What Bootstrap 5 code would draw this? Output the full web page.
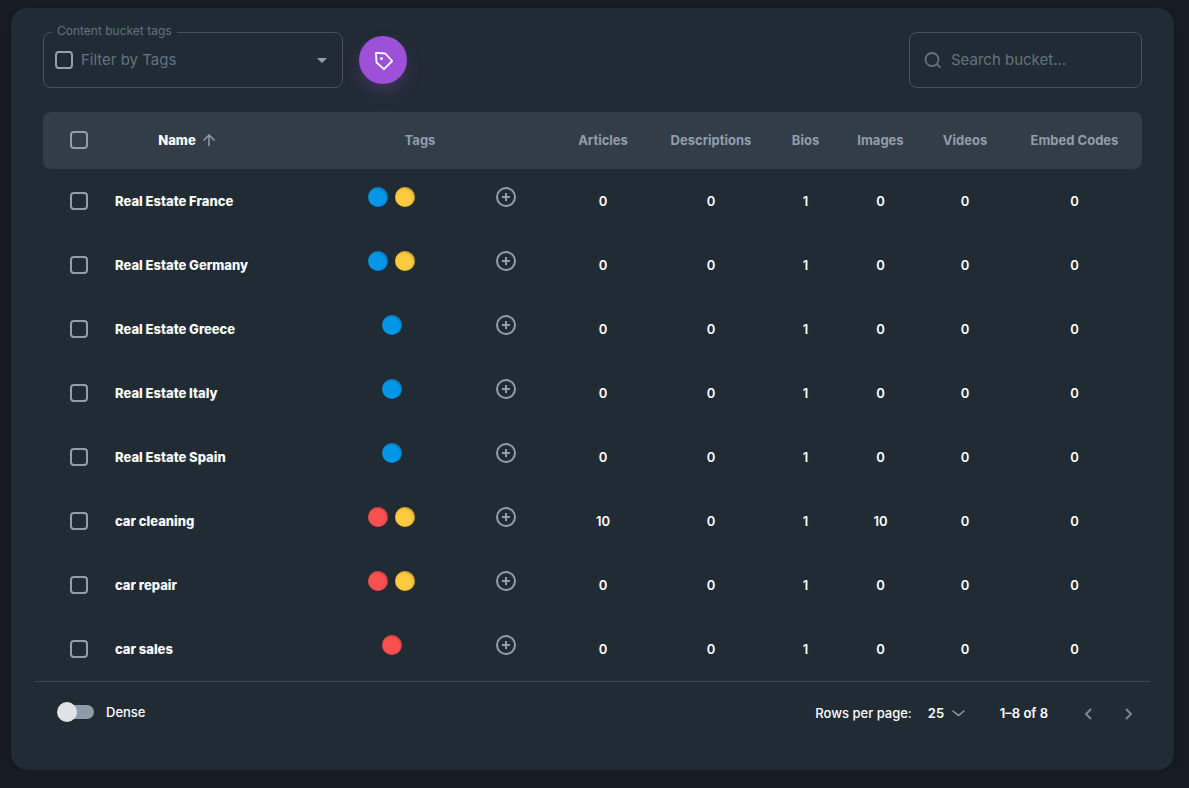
<!DOCTYPE html>
<html lang="en" data-bs-theme="dark">
<head>
<meta charset="utf-8">
<meta name="viewport" content="width=device-width, initial-scale=1">
<title>Content buckets</title>
<link href="https://cdn.jsdelivr.net/npm/bootstrap@5.3.0/dist/css/bootstrap.min.css" rel="stylesheet">
<style>
  :root { --surface: #212b34; --head: #333d47; --muted: #919eab; --faint: #637381; --line: #45535d; }
  body { background: #171c25; color: #fff; font-family: Inter, "Liberation Sans", sans-serif; font-size: 13px; line-height: 22px; }
  .panel { background: var(--surface); border-radius: 16px; margin: 8px 15px 0 11px; padding: 24px 24px 0; box-shadow: 0 0 2px rgba(0,0,0,.2), 0 8px 16px -4px rgba(0,0,0,.24); }
  .outlined { height: 56px; border: 1px solid var(--line); border-radius: 8px; }
  .tag-filter { width: 300px; padding: 0 11px; }
  .notch { top: -11px; left: 8px; padding: 0 5px; font-size: 12px; line-height: 18px; color: var(--faint); background: var(--surface); }
  .bare { background-color: transparent; border: 0; color: var(--faint); font-size: 15px; line-height: 24px; min-width: 0; appearance: none; padding: 0; }
  .bare:focus { outline: 0; }
  .bare::placeholder { color: var(--faint); opacity: 1; }
  .tag-filter .bare { background-image: url("data:image/svg+xml,%3Csvg xmlns='http://www.w3.org/2000/svg' width='10' height='5'%3E%3Cpath d='M0 0h10L5 5z' fill='%23919eab'/%3E%3C/svg%3E"); background-repeat: no-repeat; background-position: right 4px center; }
  .tick { width: 18px; height: 18px; margin: 0; border: 2px solid var(--muted); border-radius: 4px; appearance: none; display: block; flex: none; background: transparent; }
  .tick:checked { background: var(--muted); }
  .tag-btn { width: 48px; height: 48px; border: 0; background: #9d50d8; color: #fff; box-shadow: 0 8px 16px rgba(157,80,216,.24); }
  .search-box { width: 233px; padding: 0 13px; gap: 8px; color: var(--faint); }
  .buckets { table-layout: fixed; width: 100%; min-width: 1000px; border-collapse: separate; border-spacing: 0; }
  .buckets th, .buckets td { padding: 0 16px; text-align: center; white-space: nowrap; }
  .buckets thead th { height: 57px; padding-bottom: 2px; background: var(--head); color: var(--muted); font-weight: 700; }
  .buckets thead th:first-child { border-radius: 8px 0 0 8px; }
  .buckets thead th:last-child { border-radius: 0 8px 8px 0; }
  .buckets tbody > tr > * { height: 64px; font-weight: 600; }
  .buckets tr > :first-child { padding-left: 27px; padding-right: 0; }
  .buckets tbody th { text-align: left; font-weight: 800; }
  .buckets thead th.num { padding-left: 0; padding-right: 0; }
  .c-tick { width: 56px; } .c-name { width: 184px; } .c-tags { width: 274px; } .c-art { width: 92px; }
  .c-desc { width: 124px; } .c-bio { width: 65px; } .c-img { width: 85px; } .c-vid { width: 84px; } .c-emb { width: 135px; }
  .sorter, .icon-btn { border: 0; background: none; padding: 0; color: var(--muted); }
  .sorter { margin-right: 6px; font-weight: 800; color: #fff; }
  .tag-cell { padding-bottom: 8px; }
  .dots { gap: 7px; }
  .dot { width: 20px; height: 20px; border-radius: 50%; box-shadow: inset -1px 1px 2px rgba(0,0,0,.24); }
  .blue { background: #0098e6; } .yellow { background: #fbca40; } .red { background: #fb5050; }
  .add { width: 44px; margin-right: 13px; }
  .foot { border-top: 1px solid #3c4952; height: 89px; padding: 11px 2px 0 22px; font-weight: 500; }
  .toggle { appearance: none; width: 37px; height: 20px; margin: 0; position: relative; }
  .toggle::before { content: ""; position: absolute; inset: 3px 0 3px 4px; border-radius: 7px; background: #8e9ba8; }
  .toggle::after { content: ""; position: absolute; left: 0; top: 0; width: 20px; height: 20px; border-radius: 50%; background: #dfe3e8; }
  .toggle:checked::after { left: 17px; }
  .foot .bare { width: 37px; color: #fff; font-size: 13px; line-height: 22px; font-weight: 600; background-image: url("data:image/svg+xml,%3Csvg xmlns='http://www.w3.org/2000/svg' width='13' height='7' fill='none' stroke='%23919eab' stroke-width='1.5' stroke-linecap='round' stroke-linejoin='round'%3E%3Cpath d='M1 1l5.500 4.500L12 1'/%3E%3C/svg%3E"); background-repeat: no-repeat; background-position: right center; }
  .range { margin: 0 20px 0 35px; font-weight: 600; }
  .step { width: 40px; height: 40px; opacity: .85; }
</style>
</head>
<body>
<main class="panel">
  <div class="d-flex align-items-center px-2 mb-4">
    <div class="outlined tag-filter position-relative d-flex align-items-center gap-2">
      <label class="notch position-absolute" for="tags">Content bucket tags</label>
      <input class="tick" type="checkbox" aria-label="Select all tags">
      <select class="bare flex-fill" id="tags"><option>Filter by Tags</option></select>
    </div>
    <button class="tag-btn rounded-circle ms-3 p-0 d-flex align-items-center justify-content-center" type="button" aria-label="Manage tags">
      <svg width="24" height="24" viewBox="0 0 24 24" fill="none" stroke="currentColor" stroke-width="1.800" stroke-linejoin="round"><path d="M5 4.800L14.300 5.500 21.200 13 13 21.200 5.500 14.500z"/><circle cx="10.500" cy="10.500" r="1.500" fill="currentColor" stroke="none"/></svg>
    </button>
    <div class="outlined search-box ms-auto d-flex align-items-center">
      <svg class="flex-shrink-0" width="20" height="20" viewBox="0 0 20 20" fill="none" stroke="currentColor" stroke-width="1.800" stroke-linecap="round"><circle cx="9" cy="9.500" r="6.500"/><path d="M13.700 14.200l3.300 3"/></svg>
      <input class="bare flex-fill" type="text" placeholder="Search bucket..." aria-label="Search bucket">
    </div>
  </div>

  <div class="px-2">
    <table class="buckets">
      <colgroup><col class="c-tick"><col class="c-name"><col class="c-tags"><col class="c-art"><col class="c-desc"><col class="c-bio"><col class="c-img"><col class="c-vid"><col class="c-emb"></colgroup>
      <thead>
        <tr>
          <th><input class="tick" type="checkbox" aria-label="Select all buckets"></th>
          <th><button class="sorter d-inline-flex align-items-center" type="button">Name
            <svg class="ms-1" width="18" height="18" viewBox="0 0 18 18" fill="none" stroke="#919eab" stroke-width="1.500"><path d="M9 15V4M3.500 9.500L9 4l5.500 5.500"/></svg></button></th>
          <th>Tags</th><th class="num">Articles</th><th class="num">Descriptions</th><th class="num">Bios</th><th class="num">Images</th><th class="num">Videos</th><th class="num">Embed Codes</th>
        </tr>
      </thead>
      <tbody id="rows"></tbody>
    </table>
  </div>

  <div class="foot d-flex align-items-start">
    <label class="d-flex align-items-center mt-2"><input class="toggle" type="checkbox" role="switch"><span class="ms-2 ps-1">Dense</span></label>
    <div class="ms-auto d-flex align-items-center">
      <label for="per-page">Rows per page:</label>
      <select class="bare ms-3" id="per-page"><option>25</option></select>
      <span class="range">1–8 of 8</span>
      <button class="icon-btn step" type="button" aria-label="Previous page"><svg width="16" height="16" viewBox="0 0 16 16" fill="none" stroke="currentColor" stroke-width="1.800"><path d="M11 3L6 8l5 5"/></svg></button>
      <button class="icon-btn step" type="button" aria-label="Next page"><svg width="16" height="16" viewBox="0 0 16 16" fill="none" stroke="currentColor" stroke-width="1.800"><path d="M6 3l5 5-5 5"/></svg></button>
    </div>
  </div>
</main>
<script src="https://cdn.jsdelivr.net/npm/bootstrap@5.3.0/dist/js/bootstrap.bundle.min.js"></script>
<script>
  const buckets = [
    ['Real Estate France', ['blue', 'yellow'], [0, 0, 1, 0, 0, 0]],
    ['Real Estate Germany', ['blue', 'yellow'], [0, 0, 1, 0, 0, 0]],
    ['Real Estate Greece', ['blue'], [0, 0, 1, 0, 0, 0]],
    ['Real Estate Italy', ['blue'], [0, 0, 1, 0, 0, 0]],
    ['Real Estate Spain', ['blue'], [0, 0, 1, 0, 0, 0]],
    ['car cleaning', ['red', 'yellow'], [10, 0, 1, 10, 0, 0]],
    ['car repair', ['red', 'yellow'], [0, 0, 1, 0, 0, 0]],
    ['car sales', ['red'], [0, 0, 1, 0, 0, 0]]
  ];
  document.getElementById('rows').innerHTML = buckets.map(([name, tags, counts]) => `
    <tr>
      <td><input class="tick" type="checkbox" aria-label="Select ${name}"></td>
      <th scope="row">${name}</th>
      <td><div class="tag-cell d-flex align-items-center">
        <div class="dots d-flex flex-fill justify-content-center">${tags.map(t => `<span class="dot ${t}"></span>`).join('')}</div>
        <button class="icon-btn add" type="button" aria-label="Add tag to ${name}"><svg class="d-block mx-auto" width="20" height="20" viewBox="0 0 20 20" fill="none" stroke="currentColor" stroke-width="2"><circle cx="10" cy="10" r="9"/><path d="M10 6v8M6 10h8"/></svg></button>
      </div></td>
      ${counts.map(n => `<td>${n}</td>`).join('')}
    </tr>`).join('');
</script>
</body>
</html>
